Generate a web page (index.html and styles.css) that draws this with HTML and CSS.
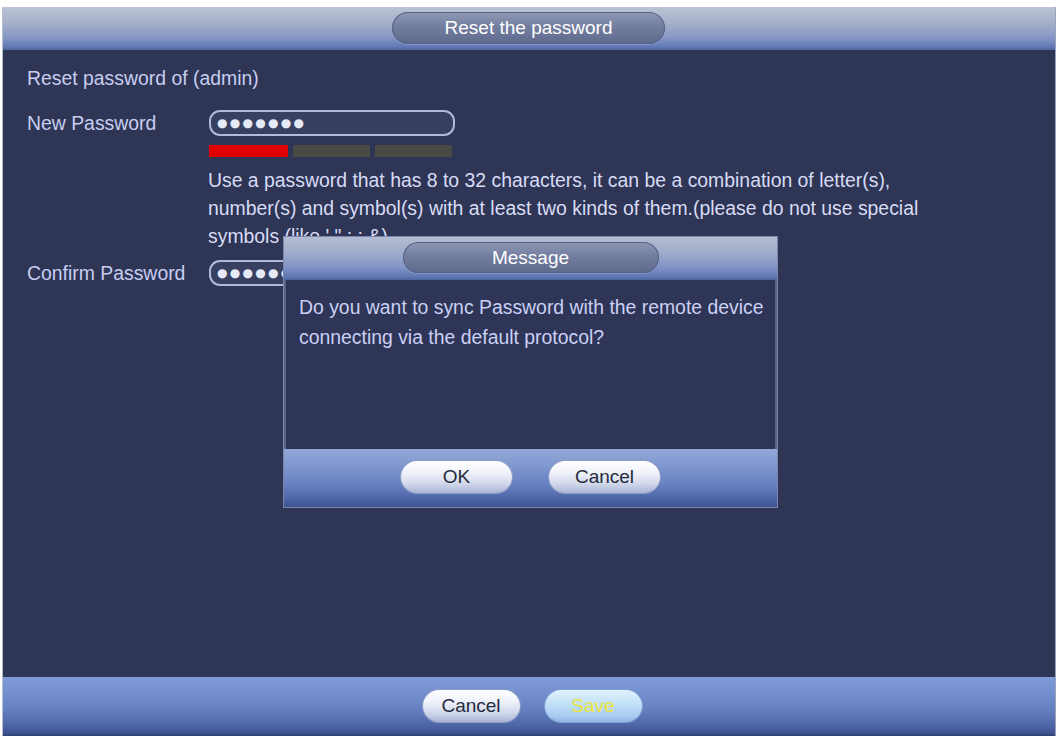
FILE: index.html
```html
<!DOCTYPE html>
<html lang="en">
<head>
<meta charset="utf-8">
<title>Reset the password</title>
<link rel="stylesheet" href="styles.css">
</head>
<body>
<div class="frame">
  <header class="titlebar">
    <div class="pill title-pill">Reset the password</div>
  </header>
  <main class="content">
    <div class="heading">Reset password of (admin)</div>
    <div class="row row-new">
      <div class="label">New Password</div>
      <div class="field">
        <div class="input"><span class="dots">●●●●●●●</span></div>
        <div class="strength"><span class="seg seg-red"></span><span class="seg"></span><span class="seg"></span></div>
        <p class="help">Use a password that has 8 to 32 characters, it can be a combination of letter(s),<br>number(s) and symbol(s) with at least two kinds of them.(please do not use special<br>symbols (like ' " ; : &amp;)</p>
      </div>
    </div>
    <div class="row row-confirm">
      <div class="label">Confirm Password</div>
      <div class="field">
        <div class="input"><span class="dots">●●●●●●●●</span></div>
      </div>
    </div>
  </main>
  <footer class="bottombar">
    <button class="btn btn-white btn-bottom">Cancel</button>
    <button class="btn btn-save btn-bottom">Save</button>
  </footer>

  <div class="dialog">
    <div class="dialog-head">
      <div class="pill msg-pill">Message</div>
    </div>
    <div class="dialog-body">
      <p class="dialog-text">Do you want to sync Password with the remote device<br>connecting via the default protocol?</p>
    </div>
    <div class="dialog-foot">
      <button class="btn btn-white btn-dialog">OK</button>
      <button class="btn btn-white btn-dialog">Cancel</button>
    </div>
  </div>
</div>
</body>
</html>
```

FILE: styles.css
```css
html, body {
  margin: 0;
  padding: 0;
  background: #ffffff;
}

body {
  font-family: "Liberation Sans", Arial, sans-serif;
  font-size: 19.4px;
  padding: 7px 0 0 3px;
}

.frame {
  position: relative;
  width: 1052px;
  height: 729px;
  display: flex;
  flex-direction: column;
  background: #2e3555;
  box-shadow: 1px 0 0 #9aa2bd, -1px 0 0 #b8bdcc;
  overflow: hidden;
}

.titlebar {
  height: 43px;
  flex: none;
  display: flex;
  justify-content: center;
  align-items: flex-start;
  padding-top: 5px;
  box-sizing: border-box;
  background: linear-gradient(#bcc3d4 0%, #a7b1ca 35%, #8798c6 70%, #6279b6 92%, #4f67a2 100%);
}

.pill {
  color: #ffffff;
  text-align: center;
  border-radius: 16px;
  font-size: 19px;
  background: linear-gradient(#8f99b6 0%, #737e9f 45%, #5e6a8c 100%);
  box-shadow: inset 0 0 0 1px #58638a, 0 1px 0 rgba(255,255,255,0.15);
}

.title-pill {
  width: 273px;
  height: 32px;
  line-height: 32px;
  margin-left: -1px;
}

.content {
  flex: 1;
  padding: 14px 0 0 24px;
  color: #c8cef2;
}

.heading {
  line-height: 28px;
}

.row {
  display: flex;
  align-items: flex-start;
}

.row-new {
  margin-top: 18px;
}

.row-confirm {
  margin-top: 10px;
}

.label {
  width: 182px;
  flex: none;
  line-height: 26px;
  height: 26px;
}

.input {
  width: 246px;
  height: 26px;
  box-sizing: border-box;
  border: 2px solid #b2badb;
  border-radius: 11px;
  background: #384062;
  display: flex;
  align-items: center;
  padding-left: 6px;
}

.dots {
  font-family: "DejaVu Sans", sans-serif;
  font-size: 12px;
  letter-spacing: 2.3px;
  color: #e6e9f6;
  line-height: 1;
}

.strength {
  display: flex;
  gap: 5px;
  margin-top: 9px;
  height: 12px;
}

.seg {
  width: 77px;
  height: 12px;
  background: #4a4a44;
}

.seg-red {
  width: 79px;
  background: #e00000;
}

.help {
  margin: 9px 0 0 -1px;
  line-height: 28px;
  color: #d8dcf5;
}

.bottombar {
  height: 59px;
  flex: none;
  box-sizing: border-box;
  display: flex;
  justify-content: center;
  align-items: flex-start;
  gap: 25px;
  padding: 13px 0 0 6px;
  background: linear-gradient(#7f9bd6 0%, #7490cf 25%, #6480c0 55%, #4e66a6 82%, #3d5290 95%, #2f4070 100%);
}

.btn {
  font-family: "Liberation Sans", Arial, sans-serif;
  font-size: 19px;
  height: 32px;
  border: none;
  border-radius: 16px;
  padding: 0;
  cursor: pointer;
  line-height: 32px;
}

.btn-white {
  color: #262b3c;
  background: linear-gradient(#ffffff 0%, #f1f3fa 35%, #d2d9ec 70%, #aab5d4 100%);
  box-shadow: 0 0 0 1px #8d9bc6;
}

.btn-save {
  color: #ece43a;
  background: linear-gradient(#e2f2fd 0%, #c4e2f8 40%, #a9cdf0 80%, #90b6e2 100%);
  box-shadow: 0 0 0 1px #7fa0d2;
}

.btn-bottom {
  width: 97px;
}

.btn-dialog {
  width: 111px;
}

.dialog {
  position: absolute;
  left: 281px;
  top: 230px;
  width: 493px;
  height: 270px;
  display: flex;
  flex-direction: column;
  background: #2e3556;
  box-shadow: 0 0 0 1px #7b86aa;
}

.dialog-head {
  height: 43px;
  flex: none;
  box-sizing: border-box;
  padding-top: 5px;
  display: flex;
  justify-content: center;
  align-items: flex-start;
  background: linear-gradient(#b3bcd2 0%, #a1adca 35%, #8194c6 70%, #6077b2 92%, #4d649e 100%);
}

.msg-pill {
  width: 256px;
  height: 31px;
  line-height: 31px;
}

.dialog-body {
  flex: 1;
  box-sizing: border-box;
  padding: 12px 0 0 15px;
  border-left: 2px solid #5a6488;
  border-right: 2px solid #5a6488;
}

.dialog-text {
  margin: 0 0 0 -2px;
  line-height: 30px;
  color: #cbd0f5;
}

.dialog-foot {
  height: 58px;
  flex: none;
  box-sizing: border-box;
  display: flex;
  justify-content: center;
  align-items: flex-start;
  gap: 37px;
  padding-top: 12px;
  background: linear-gradient(#93a8d8 0%, #7f97cf 30%, #6882c2 60%, #4f67a8 85%, #3d5290 100%);
}
```
